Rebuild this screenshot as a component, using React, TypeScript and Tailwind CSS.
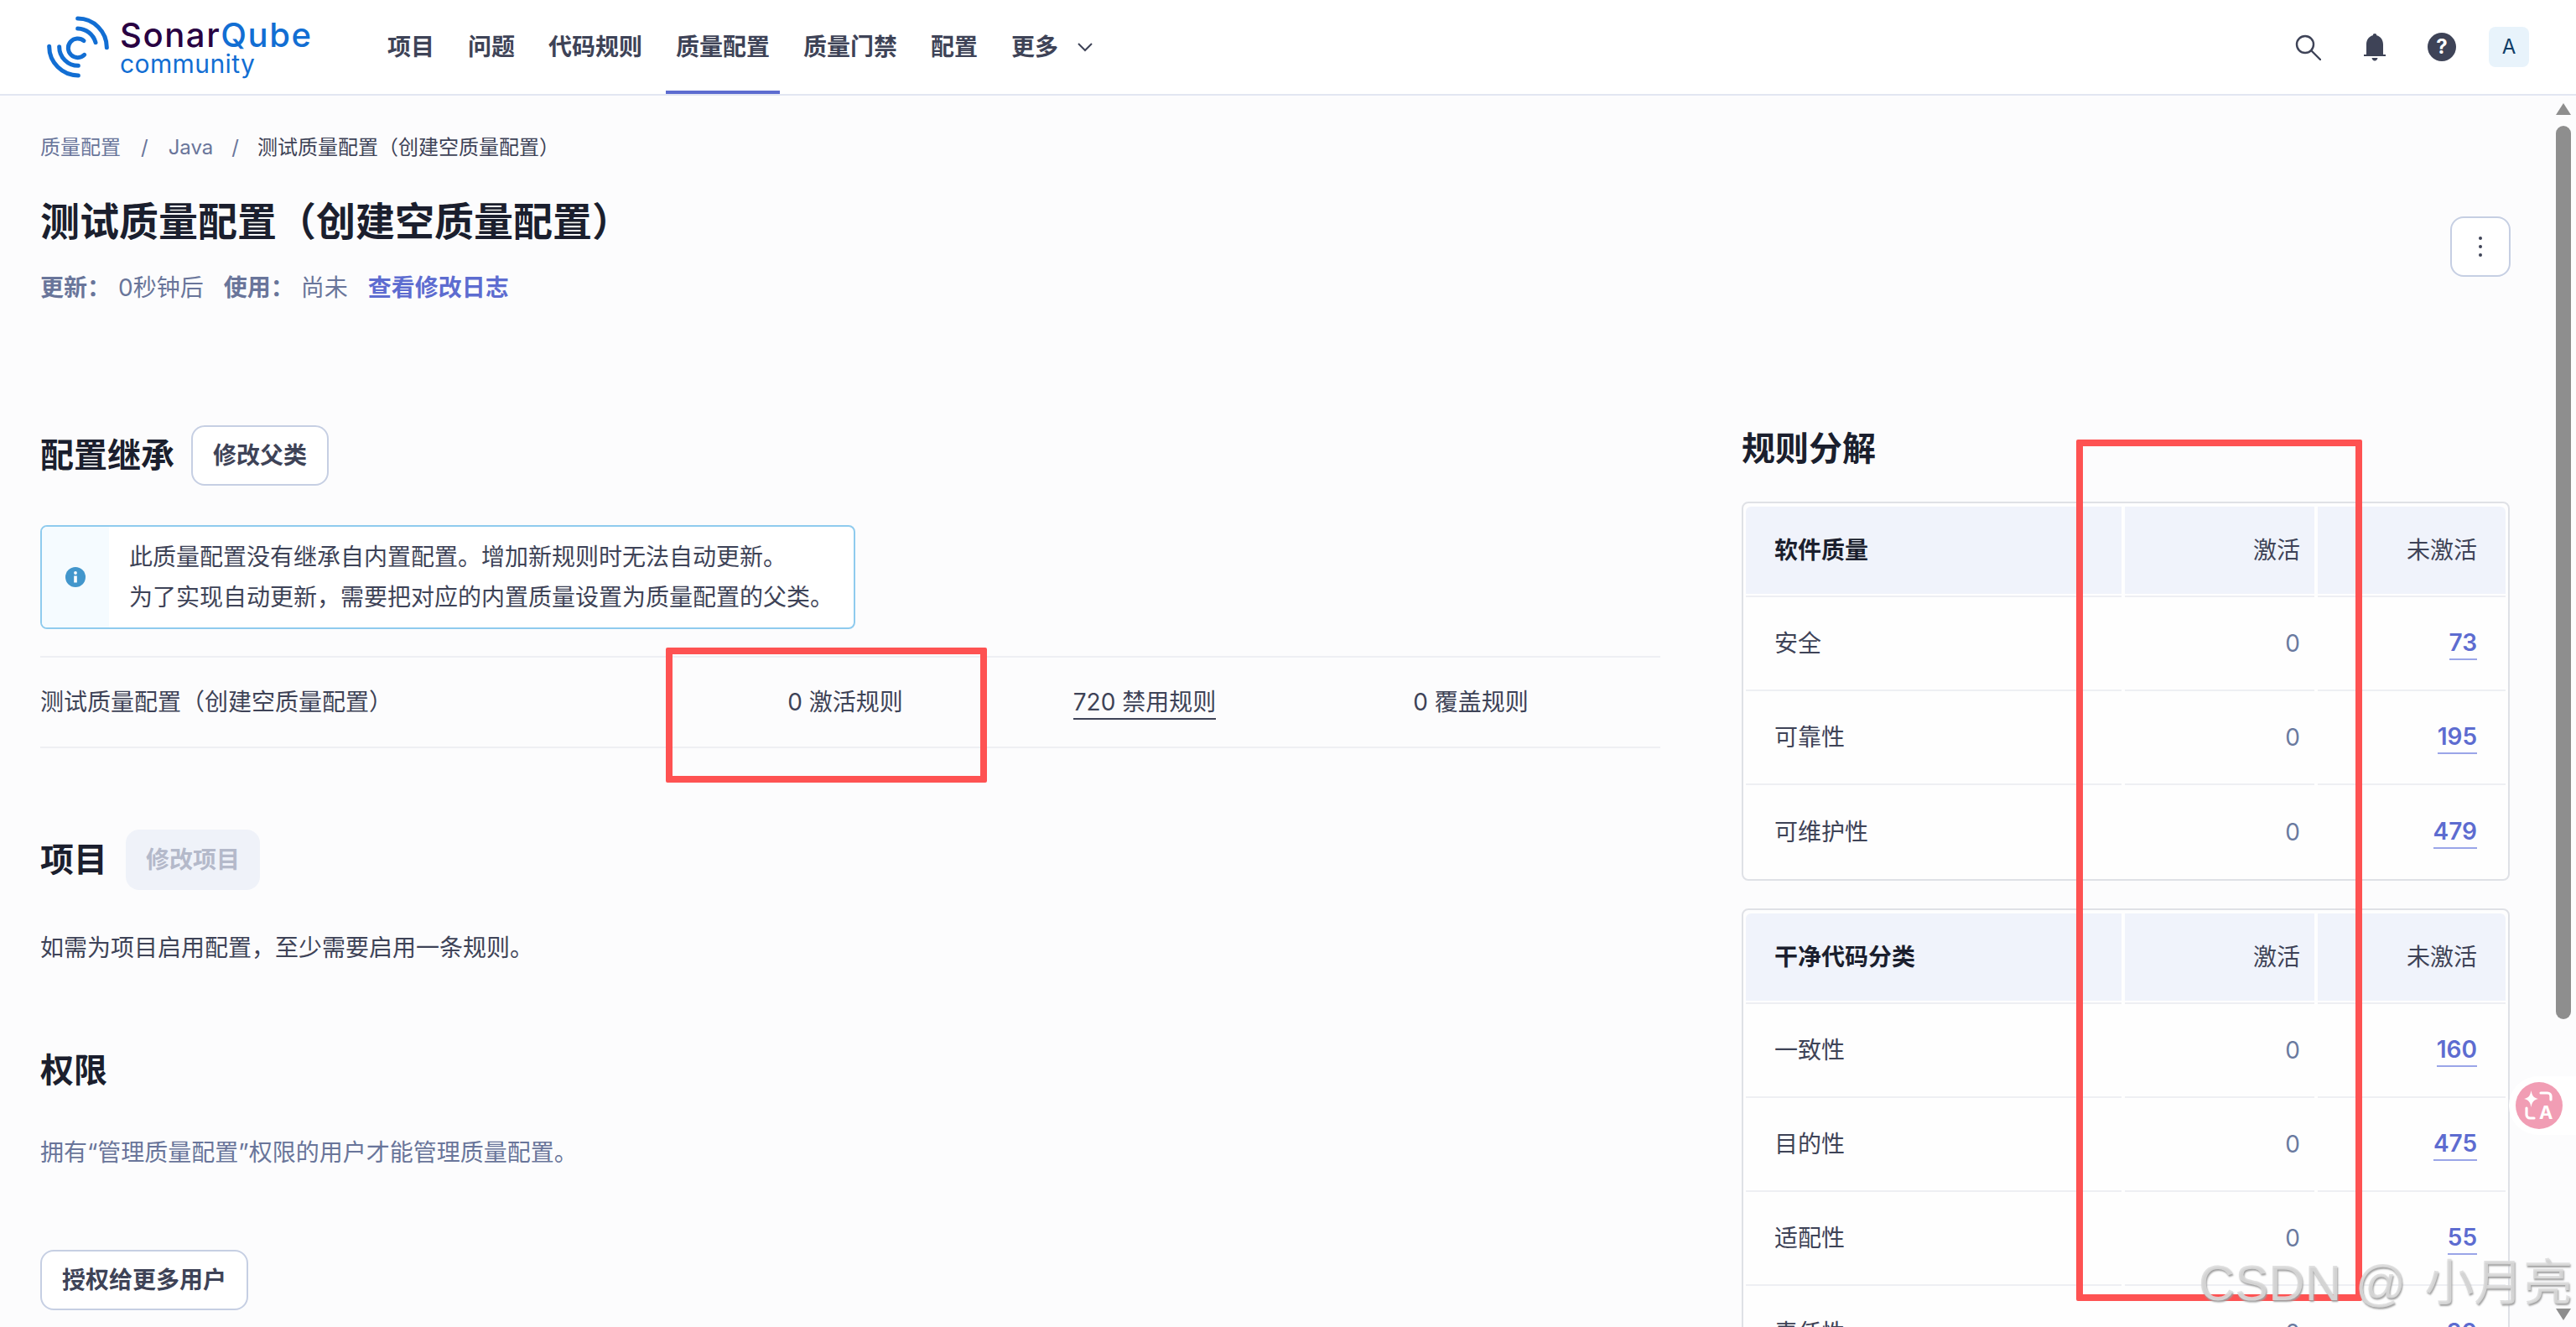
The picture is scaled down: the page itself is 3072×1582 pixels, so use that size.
import React from "react";

const FONT = "font-['Inter','Noto_Sans_CJK_SC',sans-serif]";

function Logo() {
  return (
    <div className="flex items-start w-[340px] h-[100px] mt-[8px] -ml-[5px]">
      <svg width="72" height="100" viewBox="60 0 216 300" className="shrink-0 overflow-visible" fill="none" stroke="#126ED3" strokeWidth="15" strokeLinecap="round">
        <path d="M188 36 A104 104 0 0 1 292 140" />
        <path d="M188 72 A68 68 0 0 1 252 122" />
        <path d="M210 116 A34 34 0 1 0 212 166" />
        <path d="M86 136 A104 104 0 0 0 190 240" />
        <path d="M122 137 A68 68 0 0 0 190 205" />
      </svg>
      <div className="flex flex-col ml-[21px] pt-[12px]">
        <div className="text-[40px] leading-[40px] font-medium whitespace-nowrap font-['Inter',sans-serif] tracking-[1.6px]">
          <span className="text-[#290042]">Sonar</span>
          <span className="text-[#126ED3]">Qube</span>
        </div>
        <div className="text-[30px] leading-[28px] text-[#126ED3] font-['Inter',sans-serif] tracking-[0.4px]">community</div>
      </div>
    </div>
  );
}

function NavItem({ label, active }: { label: string; active?: boolean }) {
  return (
    <div className={`relative h-full flex items-center px-3 text-[28px] font-semibold text-[#3e4357] ${active ? "border-b-4 border-[#5d6cd0] pt-1" : ""}`}>
      {label}
    </div>
  );
}

function Header() {
  return (
    <header className="h-[114px] bg-white border-b-2 border-[#e2e6f2] flex items-center pl-[55px] pr-[56px]">
      <Logo />
      <nav className="flex items-center h-full gap-4 ml-[60px]">
        <NavItem label="项目" />
        <NavItem label="问题" />
        <NavItem label="代码规则" />
        <NavItem label="质量配置" active />
        <NavItem label="质量门禁" />
        <NavItem label="配置" />
        <div className="flex items-center h-full px-3 text-[28px] font-semibold text-[#3e4357] gap-[22px]">
          更多
          <svg width="20" height="12" viewBox="0 0 20 12" fill="none" stroke="#3e4357" strokeWidth="2"><path d="M2 2 L10 10 L18 2" /></svg>
        </div>
      </nav>
      <div className="ml-auto flex items-center">
        <svg width="32" height="32" viewBox="0 0 32 32" fill="none" stroke="#3e4357" strokeWidth="2.4" strokeLinecap="round">
          <circle cx="13" cy="13" r="10" />
          <path d="M20.5 20.5 L31 31" />
        </svg>
        <svg width="28" height="34" viewBox="0 0 28 34" fill="#3e4357" className="ml-[50px]">
          <path d="M14 1 a2.4 2.4 0 0 1 2.4 2.2 C21 4.4 24 8.5 24 14 V26 H27 V28 H1 V26 H4 V14 C4 8.5 7 4.4 11.6 3.2 A2.4 2.4 0 0 1 14 1 Z" />
          <path d="M10.5 30 H17.5 C17 32.2 15.8 33.4 14 33.4 C12.2 33.4 11 32.2 10.5 30 Z" />
        </svg>
        <div className="ml-[49px] w-[34px] h-[34px] rounded-full bg-[#3e4357] flex items-center justify-center text-white text-[24px] font-bold leading-none">?</div>
        <div className="ml-[39px] w-12 h-12 rounded-lg bg-[#e8f3fb] flex items-center justify-center text-[#0f3d66] text-[24px]">A</div>
      </div>
    </header>
  );
}

function OutlineButton({ label }: { label: string }) {
  return (
    <button className="h-[72px] px-[24px] rounded-2xl border-2 border-[#c6cfe3] bg-white text-[28px] font-semibold text-[#3e4357] whitespace-nowrap">
      {label}
    </button>
  );
}

function Heading({ children }: { children: React.ReactNode }) {
  return <h2 className="text-[40px] leading-[56px] font-bold text-[#1b1f2e]">{children}</h2>;
}

function LeftColumn() {
  return (
    <div className="w-[1932px] shrink-0">
      <div className="flex items-center gap-5">
        <Heading>配置继承</Heading>
        <OutlineButton label="修改父类" />
      </div>
      <div className="mt-[47px] w-[972px] h-[124px] rounded-lg border-2 border-[#8fcbee] bg-white flex overflow-hidden">
        <div className="w-[80px] bg-[#f5fbff] flex items-center justify-center shrink-0">
          <svg width="24" height="24" viewBox="0 0 24 24">
            <circle cx="12" cy="12" r="12" fill="#4296cc" />
            <circle cx="12" cy="7" r="1.9" fill="#fff" />
            <rect x="10.2" y="10.5" width="3.6" height="8" fill="#fff" />
          </svg>
        </div>
        <div className="pl-6 text-[28px] leading-[48px] text-[#3e4357] flex flex-col justify-center whitespace-nowrap">
          <div>此质量配置没有继承自内置配置。增加新规则时无法自动更新。</div>
          <div>为了实现自动更新，需要把对应的内置质量设置为质量配置的父类。</div>
        </div>
      </div>
      <div className="mt-[32px] h-[110px] border-y-2 border-[#eeeff3] grid grid-cols-[766px_388px_326px_452px] items-center text-[28px] text-[#3e4357]">
        <div className="whitespace-nowrap">测试质量配置（创建空质量配置）</div>
        <div className="text-center">0 激活规则</div>
        <div className="text-center"><span className="inline-block border-b-2 border-[#3e4357] leading-[38px]">720 禁用规则</span></div>
        <div className="text-center">0 覆盖规则</div>
      </div>
      <div className="mt-[97px] flex items-center gap-[24px]">
        <Heading>项目</Heading>
        <button className="h-[72px] -ml-[2px] px-6 rounded-2xl bg-[#eff2f9] text-[28px] font-semibold text-[#b4b9ca] whitespace-nowrap">修改项目</button>
      </div>
      <p className="mt-[49px] text-[28px] leading-[40px] text-[#3e4357]">如需为项目启用配置，至少需要启用一条规则。</p>
      <div className="mt-[98px]"><Heading>权限</Heading></div>
      <p className="mt-[50px] text-[28px] leading-[40px] text-[#69759a]">拥有“管理质量配置”权限的用户才能管理质量配置。</p>
      <div className="mt-[96px]"><OutlineButton label="授权给更多用户" /></div>
    </div>
  );
}

function Val({ n }: { n: number }) {
  return <span className="inline-block text-[28px] font-semibold leading-[38px] text-[#5d6cd0] border-b-2 border-[#9aa5e8]">{n}</span>;
}

const ROW = "grid grid-cols-[448px_226px_224px] gap-x-1";

function Row({ name, off, last }: { name: string; off: number; last?: boolean }) {
  const line = last ? "" : "border-b-2 border-[#eeeff3]";
  return (
    <div className={`${ROW} h-[112px]`}>
      <div className={`${line} flex items-center pl-[34px] text-[#3e4357] text-[28px]`}>{name}</div>
      <div className={`${line} flex items-center justify-end pr-[17px] text-[#6a7a9f] text-[28px]`}>0</div>
      <div className={`${line} flex items-center justify-end pr-[34px]`}><Val n={off} /></div>
    </div>
  );
}

function RuleTable({ title, rows, headH }: { title: string; rows: [string, number][]; headH: string }) {
  return (
    <div className="border-2 border-[#dfe1e6] rounded-lg px-[3px] pt-1 bg-white/60">
      <div className={`${ROW} text-[28px]`}>
        <div className={`bg-[#f0f3fb] ${headH} rounded-tl-md flex items-center pl-[34px] font-bold text-[#1b1f2e]`}>{title}</div>
        <div className={`bg-[#f0f3fb] ${headH} flex items-center justify-end pr-[17px] text-[#3e4357]`}>激活</div>
        <div className={`bg-[#f0f3fb] ${headH} rounded-tr-md flex items-center justify-end pr-[34px] text-[#3e4357]`}>未激活</div>
      </div>
      <div className={`${ROW} h-[4px]`}>
        <div className="border-b-2 border-[#eeeff3]" />
        <div className="border-b-2 border-[#eeeff3]" />
        <div className="border-b-2 border-[#eeeff3]" />
      </div>
      {rows.map(([n, v], i) => (
        <Row key={n} name={n} off={v} last={i === rows.length - 1} />
      ))}
    </div>
  );
}

function RightColumn() {
  return (
    <div className="w-[916px] shrink-0 ml-[97px]">
      <Heading>规则分解</Heading>
      <div className="mt-[35px] flex flex-col gap-[33px]">
        <RuleTable title="软件质量" headH="h-[104px]" rows={[["安全", 73], ["可靠性", 195], ["可维护性", 479]]} />
        <RuleTable title="干净代码分类" headH="h-[104px]" rows={[["一致性", 160], ["目的性", 475], ["适配性", 55], ["责任性", 30]]} />
      </div>
    </div>
  );
}

function Overlays() {
  return (
    <>
      {/* scrollbar */}
      <div className="absolute left-[3048px] top-[123px] w-0 h-0 border-x-[9px] border-x-transparent border-b-[14px] border-b-[#8e8e8e]" />
      <div className="absolute left-[3048px] top-[150px] w-[18px] h-[1065px] rounded-full bg-[#8e8e8e]" />
      <div className="absolute left-[3048px] top-[1560px] w-0 h-0 border-x-[9px] border-x-transparent border-t-[14px] border-t-[#8e8e8e]" />
      {/* translate widget */}
      <div className="absolute left-[2992px] top-[1283px] w-[80px] h-[70px] rounded-l-[35px] bg-white flex items-center pl-[8px]">
        <div className="relative w-[56px] h-[56px] rounded-full bg-[#f19db4]">
          <svg width="56" height="56" viewBox="0 0 56 56" className="absolute inset-0" fill="none" stroke="#fff" strokeWidth="3.2" strokeLinecap="round">
            <path fill="#fff" stroke="none" d="M18.5 10 C19.5 16 21.5 19 27 20 C21.5 21 19.5 24 18.5 30 C17.5 24 15.5 21 10 20 C15.5 19 17.5 16 18.5 10 Z" />
            <path d="M30 13 H38 A4 4 0 0 1 42 17 V21" />
            <path d="M13 31 V39 A4 4 0 0 0 17 43 H22" />
          </svg>
          <span className="absolute left-[28px] top-[25px] text-white text-[22px] leading-[22px] font-bold font-['Inter',sans-serif]">A</span>
        </div>
      </div>
      {/* red annotation boxes */}
      <div className="absolute left-[794px] top-[772px] w-[383px] h-[161px] border-[8px] border-[#fe5252] rounded-[2px]" />
      <div className="absolute left-[2476px] top-[524px] w-[341px] h-[1027px] border-[8px] border-[#fe5252] rounded-[2px]" />
      {/* watermark */}
      <div className="absolute left-[2622px] top-[1490px] whitespace-pre text-[60px] leading-[80px] text-[#dcdcdc]/85 [text-shadow:1px_2px_2px_#a0a0a0] font-['Liberation_Sans','Noto_Sans_CJK_SC',sans-serif]">
        CSDN @ <span className="ml-[5px] text-[59px]">小月亮</span>
      </div>
    </>
  );
}

export default function App() {
  return (
    <div className={`relative w-[3072px] h-[1582px] overflow-hidden bg-[#fcfcfd] ${FONT}`}>
      <Header />
      <main className="pl-12 pt-[46px]">
        <div className="flex items-center text-[24px] leading-[32px] text-[#69759a] whitespace-pre">
          <span>质量配置</span>
          <span className="mx-[24px]">/</span>
          <span>Java</span>
          <span className="mx-[22px]">/</span>
          <span className="text-[#3e4357]">测试质量配置（创建空质量配置）</span>
        </div>
        <div className="flex items-start pr-[78px]">
          <div>
            <h1 className="mt-[40px] text-[47px] leading-[64px] font-bold text-[#1b1f2e] whitespace-nowrap">测试质量配置（创建空质量配置）</h1>
            <div className="mt-[27px] flex items-center text-[28px] leading-[40px] text-[#69759a]">
              <span className="font-semibold">更新：</span>
              <span className="ml-[9px]">0秒钟后</span>
              <span className="font-semibold ml-6">使用：</span>
              <span className="ml-2">尚未</span>
              <span className="font-semibold text-[#5d6cd0] ml-6">查看修改日志</span>
            </div>
          </div>
          <button className="ml-auto mt-[66px] w-[72px] h-[72px] rounded-2xl border-2 border-[#c6cfe3] bg-white flex flex-col items-center justify-center gap-[6px]">
            <span className="w-1 h-1 rounded-full bg-[#3e4357]" />
            <span className="w-1 h-1 rounded-full bg-[#3e4357]" />
            <span className="w-1 h-1 rounded-full bg-[#3e4357]" />
          </button>
        </div>
        <div className="flex items-start mt-[144px]">
          <LeftColumn />
          <RightColumn />
        </div>
      </main>
      <Overlays />
    </div>
  );
}
